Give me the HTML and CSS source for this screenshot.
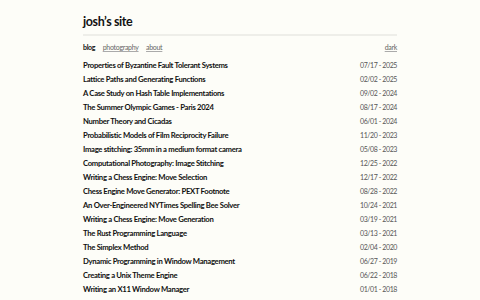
FILE: index.html
```html
<!DOCTYPE html>
<html>
  <head>
    <meta charset="utf-8">
    <title>josh's site</title>
    <link rel="stylesheet" href="styles.css">
  </head>
  <body>
    <div id="page">
      <header class="site_header">
        <a class="site_title" href="#">josh’s site</a>
      </header>
      <nav class="site_nav">
        <div class="links">
          <a class="current" href="#">blog</a>
          <a href="#">photography</a>
          <a href="#">about</a>
        </div>
        <a class="theme" href="#">dark</a>
      </nav>
      <ul class="posts">
        <li><a href="#">Properties of Byzantine Fault Tolerant Systems</a><span class="date">07/17 - 2025</span></li>
        <li><a href="#">Lattice Paths and Generating Functions</a><span class="date">02/02 - 2025</span></li>
        <li><a href="#">A Case Study on Hash Table Implementations</a><span class="date">09/02 - 2024</span></li>
        <li><a href="#">The Summer Olympic Games - Paris 2024</a><span class="date">08/17 - 2024</span></li>
        <li><a href="#">Number Theory and Cicadas</a><span class="date">06/01 - 2024</span></li>
        <li><a href="#">Probabilistic Models of Film Reciprocity Failure</a><span class="date">11/20 - 2023</span></li>
        <li><a href="#">Image stitching: 35mm in a medium format camera</a><span class="date">05/08 - 2023</span></li>
        <li><a href="#">Computational Photography: Image Stitching</a><span class="date">12/25 - 2022</span></li>
        <li><a href="#">Writing a Chess Engine: Move Selection</a><span class="date">12/17 - 2022</span></li>
        <li><a href="#">Chess Engine Move Generator: PEXT Footnote</a><span class="date">08/28 - 2022</span></li>
        <li><a href="#">An Over-Engineered NYTimes Spelling Bee Solver</a><span class="date">10/24 - 2021</span></li>
        <li><a href="#">Writing a Chess Engine: Move Generation</a><span class="date">03/19 - 2021</span></li>
        <li><a href="#">The Rust Programming Language</a><span class="date">03/13 - 2021</span></li>
        <li><a href="#">The Simplex Method</a><span class="date">02/04 - 2020</span></li>
        <li><a href="#">Dynamic Programming in Window Management</a><span class="date">06/27 - 2019</span></li>
        <li><a href="#">Creating a Unix Theme Engine</a><span class="date">06/22 - 2018</span></li>
        <li><a href="#">Writing an X11 Window Manager</a><span class="date">01/01 - 2018</span></li>
      </ul>
    </div>
  </body>
</html>
```

FILE: styles.css
```css
body {
  margin: 0;
  background: #fdfdf8;
  color: #111;
  font-family: Lato, "Noto Sans", sans-serif;
  font-size: 8px;
}

a {
  color: inherit;
  text-decoration: none;
}

#page {
  width: 314px;
  margin: 0 auto;
  padding-top: 14px;
}

.site_header {
  padding-bottom: 5px;
  border-bottom: 2px solid #eeeee9;
}

.site_title {
  font-size: 12.5px;
  font-weight: bold;
  letter-spacing: -0.4px;
}

.site_nav {
  display: flex;
  justify-content: space-between;
  align-items: baseline;
  margin-top: 7px;
  font-size: 7px;
  letter-spacing: -0.3px;
}

.site_nav .links {
  display: flex;
  gap: 7.5px;
}

.site_nav a {
  color: #666;
  text-decoration: underline;
  text-decoration-color: #aaa;
}

.site_nav a.current {
  color: #111;
  font-weight: bold;
  text-decoration: none;
}

.posts {
  list-style: none;
  margin: 9px 0 0;
  padding: 0;
}

.posts li {
  display: flex;
  justify-content: space-between;
  align-items: baseline;
  height: 14px;
}

.posts a {
  font-size: 7.7px;
  font-weight: bold;
  letter-spacing: -0.3px;
}

.posts .date {
  color: #555;
  font-size: 7px;
  letter-spacing: -0.4px;
}
```
